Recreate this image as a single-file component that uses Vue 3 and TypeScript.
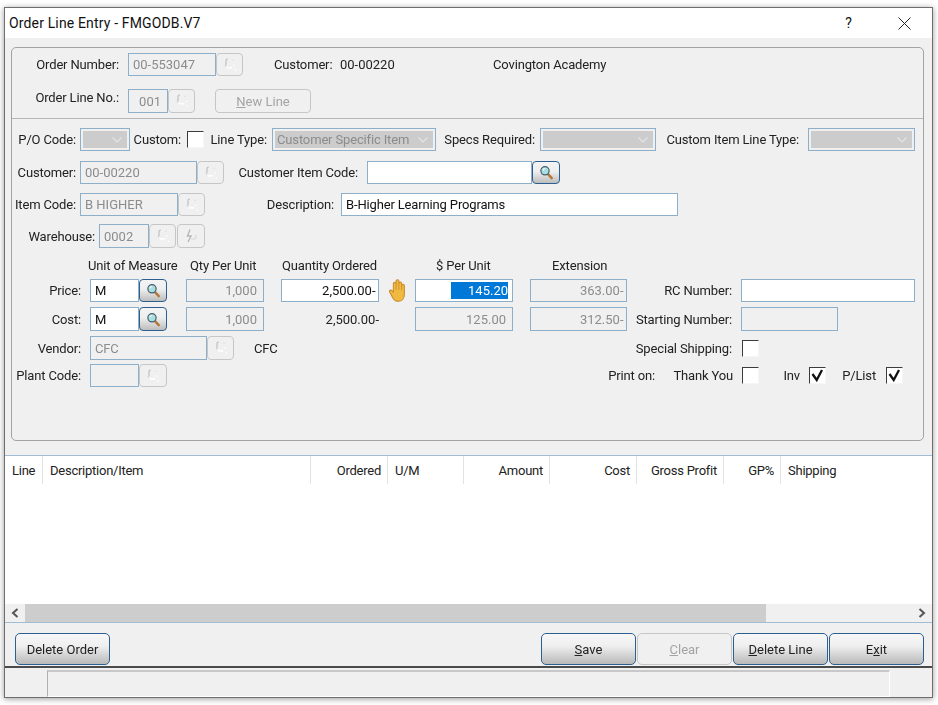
<script setup lang="ts">
type Kind = 'label' | 'text' | 'field' | 'select' | 'btn' | 'jump' | 'search' | 'check' | 'hand'
interface Cell { k: Kind; x0: number; x1: number; t?: string; on?: boolean; right?: boolean; up?: boolean; sel?: boolean; checked?: boolean; plain?: boolean; disabled?: boolean }
interface Row { y: number; h: number; cells: Cell[] }

const L = (t: string, x0: number, x1: number, up = false): Cell => ({ k: 'label', t, x0, x1, up })
const T = (t: string, x0: number, x1: number): Cell => ({ k: 'text', t, x0, x1 })
const F = (t: string, x0: number, x1: number, opt: Partial<Cell> = {}): Cell => ({ k: 'field', t, x0, x1, ...opt })
const B = (x0: number, x1: number): Cell => ({ k: 'btn', x0, x1 })
const S = (x0: number, x1: number): Cell => ({ k: 'search', x0, x1 })
const C = (x0: number, checked = false): Cell => ({ k: 'check', x0, x1: x0 + 17, checked })
const D = (x0: number, x1: number, t = ''): Cell => ({ k: 'select', x0, x1, t })

const ORIGIN_X = 12

const headRows: Row[] = [
  { y: 53, h: 23, cells: [L('Order Number:', 30, 119), F('00-553047', 128, 216), B(216, 243), T('Customer:', 274, 330), T('00-00220', 340, 400), T('Covington Academy', 493, 620)] },
  { y: 89, h: 24, cells: [L('Order Line No.:', 25, 119, true), F('001', 128, 168, { right: true }), B(168, 195), { k: 'btn', x0: 215, x1: 311, t: 'New Line', plain: true, disabled: true }] },
]

const bodyRows: Row[] = [
  { y: 128, h: 23, cells: [L('P/O Code:', 12, 76), D(80, 130), L('Custom:', 134, 181), C(187), L('Line Type:', 205, 267), D(272, 436, 'Customer Specific Item'), L('Specs Required:', 440, 535), D(540, 656), L('Custom Item Line Type:', 660, 799), D(808, 915)] },
  { y: 161, h: 23, cells: [L('Customer:', 12, 76), F('00-00220', 80, 197), B(197, 224), L('Customer Item Code:', 232, 358), F('', 367, 532, { on: true }), S(532, 560)] },
  { y: 193, h: 23, cells: [L('Item Code:', 12, 76), F('B HIGHER', 80, 178), B(178, 205), L('Description:', 260, 334), F('B-Higher Learning Programs', 341, 678, { on: true })] },
  { y: 224, h: 24, cells: [L('Warehouse:', 20, 95), F('0002', 99, 149), B(149, 176), { k: 'jump', x0: 177, x1: 205 }] },
  { y: 257, h: 17, cells: [T('Unit of Measure', 88, 186), T('Qty Per Unit', 190, 270), T('Quantity Ordered', 282, 400), T('$ Per Unit', 436, 510), T('Extension', 552, 620)] },
  { y: 279, h: 23, cells: [L('Price:', 40, 81), F('M', 90, 139, { on: true }), S(139, 167), F('1,000', 186, 264, { right: true }), F('2,500.00-', 281, 379, { on: true, right: true }), { k: 'hand', x0: 388, x1: 406 }, F('145.20', 415, 513, { on: true, right: true, sel: true }), F('363.00-', 530, 627, { right: true }), L('RC Number:', 650, 732), F('', 741, 915, { on: true })] },
  { y: 307, h: 24, cells: [L('Cost:', 40, 81), F('M', 90, 139, { on: true }), S(139, 167), F('1,000', 186, 264, { right: true }), L('2,500.00-', 300, 379), F('125.00', 415, 513, { right: true }), F('312.50-', 530, 627, { right: true }), L('Starting Number:', 632, 732), F('', 741, 838)] },
  { y: 336, h: 24, cells: [L('Vendor:', 30, 81), F('CFC', 90, 207), B(207, 234), T('CFC', 254, 290), L('Special Shipping:', 600, 732), C(742)] },
  { y: 364, h: 23, cells: [L('Plant Code:', 14, 81), F('', 90, 139), B(139, 167), L('Print on:', 600, 655), L('Thank You', 660, 733), C(742), L('Inv', 770, 800), C(809, true), L('P/List', 830, 876), C(886, true)] },
]

const layout = (rows: Row[], startY: number) => {
  let bottom = startY
  return rows.map((row) => {
    const mt = row.y - bottom
    bottom = row.y + row.h
    let end = ORIGIN_X
    const cells = row.cells.map((c) => {
      const ml = c.x0 - end
      end = c.x1
      return {
        ...c,
        num: /\d/.test(c.t ?? '') || c.t === 'B HIGHER',
        dash: (c.t ?? '').endsWith('-'),
        style: { width: `${c.x1 - c.x0}px`, marginLeft: `${ml}px` },
      }
    })
    return { rowStyle: { height: `${row.h}px`, marginTop: `${mt}px` }, cells }
  })
}

const sections = [
  { cls: 'section head', rows: layout(headRows, 48) },
  { cls: 'section', rows: layout(bodyRows, 119) },
]

const columns = [
  { t: 'Line', w: 38 }, { t: 'Description/Item', w: 268 }, { t: 'Ordered', w: 77, right: true }, { t: 'U/M', w: 76 },
  { t: 'Amount', w: 86, right: true }, { t: 'Cost', w: 87, right: true }, { t: 'Gross Profit', w: 87, right: true },
  { t: 'GP%', w: 57, right: true }, { t: 'Shipping', w: 152 },
]
</script>

<template>
  <div class="page">
    <div class="window">
      <div class="titlebar">
        <span class="title">Order Line Entry - FMGODB.V7</span>
        <span class="help">?</span>
        <svg class="close" width="13" height="13" viewBox="0 0 13 13"><path d="M.5.5l12 12M12.5.5l-12 12" stroke="#222" stroke-width="1" fill="none" /></svg>
      </div>

      <div class="group">
        <div v-for="sec in sections" :key="sec.cls" :class="sec.cls">
          <div v-for="(row, i) in sec.rows" :key="i" class="row" :style="row.rowStyle">
            <template v-for="(c, j) in row.cells" :key="j">
              <span v-if="c.k === 'label'" class="cell label" :class="{ up: c.up, num: c.num }" :style="c.style">{{ c.t }}</span>
              <span v-else-if="c.k === 'text'" class="cell text" :class="{ num: c.num }" :style="c.style">{{ c.t }}</span>
              <span v-else-if="c.k === 'field'" class="cell field" :class="{ on: c.on, right: c.right, num: c.num, dash: c.dash, sel: c.sel }" :style="c.style">
                <span v-if="c.sel" class="selected">{{ c.t }}</span><template v-else>{{ c.t }}</template>
              </span>
              <span v-else-if="c.k === 'select'" class="cell select" :style="c.style">
                <span class="select-inner">
                  <span class="select-text">{{ c.t }}</span>
                  <svg width="10" height="6" viewBox="0 0 10 6"><path d="M.5.5L5 5 9.5.5" stroke="#e4e4e4" stroke-width="1.2" fill="none" /></svg>
                </span>
              </span>
              <span v-else-if="c.k === 'btn' && c.plain" class="cell btn wide" :style="c.style"><u>N</u>ew Line</span>
              <span v-else-if="c.k === 'btn'" class="cell btn" :style="c.style">
                <svg width="16" height="16" viewBox="0 0 14 14" fill="none"><path d="M3.500 7V3.200Q3.500 1.800 5 1.800" stroke="#bdbdbd" stroke-width="1" /><path d="M2.500 7.500h1" stroke="#c8c8c8" stroke-width="1" /><path d="M4.500 9.500h4.500" stroke="#fff" stroke-width="1.300" /><path d="M10.500 6.500v1.200M11 11.500h1.200" stroke="#fff" stroke-width="1.200" /><path d="M9 3h1.500" stroke="#e0e0e0" stroke-width="1" /></svg>
              </span>
              <span v-else-if="c.k === 'jump'" class="cell btn" :style="c.style">
                <svg width="14" height="16" viewBox="0 0 14 16" fill="none"><path d="M6 1.500L3.500 8H7l-3 6" stroke="#b4b4b4" stroke-width="1.300" /><path d="M7 11h3q2 0 2-2V7" stroke="#d8d8d8" stroke-width="1.200" /></svg>
              </span>
              <span v-else-if="c.k === 'search'" class="cell search" :style="c.style">
                <svg width="15" height="15" viewBox="0 0 16 16" fill="none">
                  <path d="M9.600 9.800l4 4.200" stroke="#b5763a" stroke-width="2.600" stroke-linecap="round" />
                  <circle cx="6.400" cy="6.200" r="4.400" fill="#a9dfe0" stroke="#46606c" stroke-width="1.300" />
                  <path d="M4.200 5.600Q4.800 3.900 6.600 3.800" stroke="#fff" stroke-width="1.100" />
                </svg>
              </span>
              <span v-else-if="c.k === 'check'" class="cell check" :style="c.style">
                <svg v-if="c.checked" width="13" height="13" viewBox="0 0 13 13"><path d="M1.500 5l4.200 6 5.300-10" stroke="#111" stroke-width="2.300" fill="none" /></svg>
              </span>
              <span v-else-if="c.k === 'hand'" class="cell hand" :style="c.style">
                <svg width="17" height="23" viewBox="0.800 0.600 14.600 20">
                  <path d="M4.500 12V4.600a1.200 1.200 0 0 1 2.400 0V2.400a1.200 1.200 0 0 1 2.400 0v2a1.200 1.200 0 0 1 2.400 0v2a1.200 1.200 0 0 1 2.400 0V14c0 3.600-2.200 6-5.400 6-2.600 0-3.800-1.300-5-3.600L1.300 12c-.7-1.400 1-2.500 2-1.300z" fill="#f0b93f" stroke="#c98b2b" stroke-width=".9" stroke-linejoin="round" />
                  <path d="M6.900 4.600V10M9.300 4V10M11.700 6.400V10.500" stroke="#c98b2b" stroke-width=".7" fill="none" />
                </svg>
              </span>
            </template>
          </div>
        </div>
      </div>

      <div class="grid">
        <div class="grid-head">
          <span v-for="col in columns" :key="col.t" class="col" :class="{ right: col.right }" :style="{ width: `${col.w}px` }">{{ col.t }}</span>
        </div>
      </div>

      <div class="scrollbar">
        <svg class="arrow" width="8" height="10" viewBox="0 0 8 10"><path d="M6.500 1L2 5l4.500 4" stroke="#555" stroke-width="2" fill="none" /></svg>
        <div class="track"><div class="thumb"></div></div>
        <svg class="arrow" width="8" height="10" viewBox="0 0 8 10"><path d="M1.500 1L6 5 1.500 9" stroke="#555" stroke-width="2" fill="none" /></svg>
      </div>

      <div class="actions">
        <button class="action">Delete Order</button>
        <span class="grow"></span>
        <button class="action"><u>S</u>ave</button>
        <button class="action off"><u>C</u>lear</button>
        <button class="action"><u>D</u>elete Line</button>
        <button class="action">E<u>x</u>it</button>
      </div>

      <div class="statusbar">
        <div class="status-panel"></div>
      </div>
    </div>
  </div>
</template>

<style>
html, body { margin: 0; background: #fff; }
</style>

<style scoped>
.page {
  height: 705px;
  overflow: hidden;
  font-family: Roboto, "Liberation Sans", sans-serif;
  font-size: 13px;
  letter-spacing: -0.15px;
  color: #222;
  padding: 7px 0 0 4px;
  box-sizing: border-box;
  filter: blur(0.35px);
}
.window {
  width: 929px;
  height: 691px;
  box-sizing: border-box;
  border: 1px solid #6e6e6e;
  background: #f0f0f0;
  box-shadow: 0 1px 6px rgba(0, 0, 0, 0.4);
  display: flex;
  flex-direction: column;
}
.titlebar {
  height: 30px;
  flex: none;
  background: #fff;
  display: flex;
  align-items: center;
  padding-left: 4px;
  font-size: 14px;
  letter-spacing: 0.15px;
  color: #111;
}
.title { flex: 1; }
.help { margin-right: 46px; font-size: 14px; }
.close { margin-right: 21px; }

.group {
  flex: none;
  margin: 9px 0 0 6px;
  width: 913px;
  height: 394px;
  box-sizing: border-box;
  border: 1px solid #a3a3a3;
  border-radius: 5px;
}
.section {
  display: flex;
  flex-direction: column;
}
.section.head {
  height: 71px;
  box-sizing: border-box;
  border-bottom: 1px solid #b5b5b5;
}
.row {
  display: flex;
  flex: none;
  align-items: stretch;
}
.cell {
  flex: none;
  box-sizing: border-box;
  display: flex;
  align-items: center;
  white-space: nowrap;
}
.num { letter-spacing: 0; }
.label { justify-content: flex-end; }
.label.up { padding-bottom: 8px; }
.field {
  border: 1.5px solid #8eafca;
  padding: 0 4px;
  color: #8c8c8c;
}
.field.on { background: #fff; color: #111; }
.field.right { justify-content: flex-end; padding-right: 6px; }
.field.right.dash { padding-right: 2.5px; }
.field.right.sel { padding-right: 4px; }
.selected {
  background: #0078d7;
  color: #fff;
  width: 57px;
  height: 17px;
  line-height: 17px;
  text-align: right;
}
.select {
  border: 1.5px solid #8eafca;
  padding: 2px;
}
.select-inner {
  flex: 1;
  height: 100%;
  background: #cccccc;
  display: flex;
  align-items: center;
  justify-content: space-between;
  padding: 0 5px 0 2px;
  color: #8c8c8c;
}
.btn {
  border: 1.5px solid #c6c6c6;
  border-radius: 4px;
  justify-content: center;
  color: #a4a4a4;
  letter-spacing: 0;
}
.search {
  border: 1.5px solid #2b5f90;
  border-radius: 4px;
  justify-content: center;
  background: linear-gradient(#f4f4f4, #eeeeee 45%, #bdbdbd);
}
.check {
  height: 17px;
  align-self: center;
  background: #fff;
  border-top: 1.5px solid #3c3c3c;
  border-left: 1.5px solid #3c3c3c;
  border-right: 1.5px solid #f6f6f6;
  border-bottom: 1.5px solid #f6f6f6;
  justify-content: center;
}
.hand { justify-content: center; }

.grid {
  flex: none;
  margin-top: 14px;
  height: 148px;
  border-top: 1px solid #a2bdd3;
  background: #fff;
}
.grid-head {
  display: flex;
  height: 28px;
  letter-spacing: -0.25px;
}
.col {
  flex: none;
  box-sizing: border-box;
  display: flex;
  align-items: center;
  padding: 0 6px 0 7px;
  border-right: 1px solid #e2e2e2;
}
.col.right { justify-content: flex-end; }
.col:last-child { border-right: 0; }

.scrollbar {
  flex: none;
  height: 19px;
  display: flex;
  align-items: center;
  border-bottom: 1px solid #a2bdd3;
  box-sizing: border-box;
}
.arrow { flex: none; margin: 0 6px; }
.track { flex: 1; height: 100%; }
.thumb { width: 741px; height: 100%; background: #cdcdcd; }

.actions {
  flex: none;
  height: 43px;
  box-sizing: border-box;
  padding: 10px 8px 0 10px;
  display: flex;
  gap: 1px;
}
.grow { flex: 1; }
.action {
  width: 95px;
  height: 32px;
  padding: 0;
  font: inherit;
  letter-spacing: 0;
  color: #222;
  border: 1.5px solid #2b5f90;
  border-radius: 5px;
  background: linear-gradient(#f7f7f7, #efefef 40%, #b9b9b9);
}
.action.off {
  border-color: #c6c6c6;
  background: #f0f0f0;
  color: #a4a4a4;
}
.statusbar {
  flex: 1;
  border-top: 2px solid #4a4a4a;
  padding: 2px 42px 0 42px;
}
.status-panel {
  height: 100%;
  box-sizing: border-box;
  border-top: 2px solid #c8c8c8;
  border-left: 1px solid #b0b0b0;
  border-right: 1px solid #fff;
  border-bottom: 1px solid #fff;
}
</style>
